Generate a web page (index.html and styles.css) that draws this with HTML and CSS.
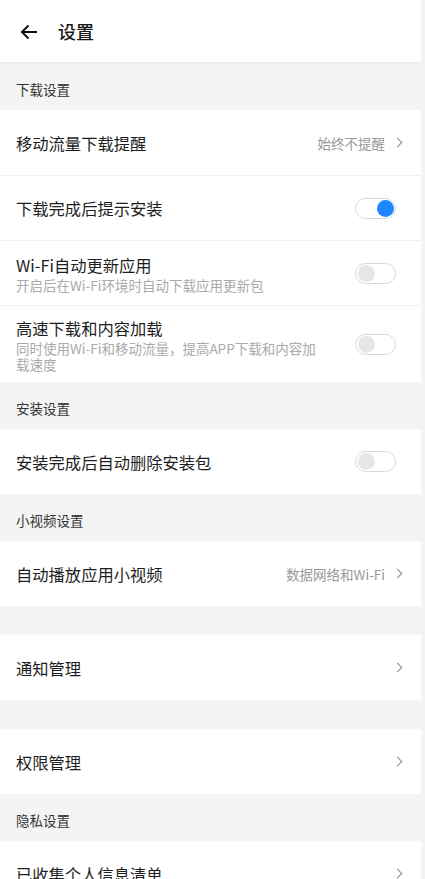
FILE: index.html
```html
<!DOCTYPE html>
<html lang="zh-CN">
<head>
    <meta charset="UTF-8">
    <meta name="viewport" content="width=device-width, initial-scale=1.0">
    <title>设置</title>
    <link rel="stylesheet" href="styles.css">
</head>
<body>
<div id="page">
    <header class="topbar">
        <a class="back">
            <svg width="18" height="16" viewBox="0 0 18 16"><path d="M17 8H2M8.5 1.5 2 8l6.5 6.5" fill="none" stroke="#111" stroke-width="2"/></svg>
        </a>
        <h1 class="title">设置</h1>
    </header>

    <div class="group-title">下载设置</div>
    <ul class="group">
        <li class="row">
            <span class="label">移动流量下载提醒</span>
            <span class="value">始终不提醒</span>
            <i class="arrow"></i>
        </li>
        <li class="row">
            <span class="label">下载完成后提示安装</span>
            <span class="switch on"></span>
        </li>
        <li class="row">
            <div class="text">
                <span class="label">Wi-Fi自动更新应用</span>
                <p class="desc">开启后在Wi-Fi环境时自动下载应用更新包</p>
            </div>
            <span class="switch"></span>
        </li>
        <li class="row row-tall">
            <div class="text">
                <span class="label">高速下载和内容加载</span>
                <p class="desc desc-wrap">同时使用Wi-Fi和移动流量，提高APP下载和内容加载速度</p>
            </div>
            <span class="switch"></span>
        </li>
    </ul>

    <div class="group-title">安装设置</div>
    <ul class="group">
        <li class="row">
            <span class="label">安装完成后自动删除安装包</span>
            <span class="switch"></span>
        </li>
    </ul>

    <div class="group-title">小视频设置</div>
    <ul class="group">
        <li class="row">
            <span class="label">自动播放应用小视频</span>
            <span class="value">数据网络和Wi-Fi</span>
            <i class="arrow"></i>
        </li>
    </ul>

    <div class="gap"></div>
    <ul class="group">
        <li class="row">
            <span class="label">通知管理</span>
            <i class="arrow"></i>
        </li>
    </ul>

    <div class="gap"></div>
    <ul class="group">
        <li class="row">
            <span class="label">权限管理</span>
            <i class="arrow"></i>
        </li>
    </ul>

    <div class="group-title">隐私设置</div>
    <ul class="group">
        <li class="row">
            <span class="label">已收集个人信息清单</span>
            <i class="arrow"></i>
        </li>
    </ul>
</div>
</body>
</html>
```

FILE: styles.css
```css
html, body {
    margin: 0;
    background: #f4f4f4;
}

body {
    font-family: "Noto Sans CJK SC", "Noto Sans", sans-serif;
    color: #222;
}

ul {
    margin: 0;
    padding: 0;
    list-style: none;
}

#page {
    width: 421px;
    overflow: hidden;
}

.topbar {
    display: flex;
    align-items: center;
    height: 62px;
    background: #fff;
    border-bottom: 1px solid #ebebeb;
    box-shadow: 0 1px 2px rgba(0, 0, 0, .03);
    padding: 0 0 0 20px;
}

.back {
    display: flex;
    width: 18px;
    height: 16px;
    margin-top: 2px;
}

.title {
    margin: 0 0 0 20px;
    font-size: 18px;
    font-weight: 500;
    line-height: 1;
    color: #1a1a1a;
}

.group-title {
    height: 47px;
    box-sizing: border-box;
    padding: 16px 16px 0;
    font-size: 13.5px;
    line-height: 20px;
    color: #333;
}

.gap {
    height: 29px;
}

.group {
    background: #fff;
}

.row {
    display: flex;
    align-items: center;
    min-height: 65px;
    box-sizing: border-box;
    padding: 0 19px 0 16px;
}

.row + .row {
    border-top: 1px solid #efefef;
}

.row-tall {
    min-height: 77px;
    padding-top: 9px;
    padding-bottom: 9px;
}

.label {
    flex: 1;
    font-size: 16.3px;
    line-height: 22px;
    color: #1e1e1e;
}

.text {
    flex: 1;
    display: flex;
    flex-direction: column;
}

.desc {
    margin: 1px 0 0;
    font-size: 13.5px;
    line-height: 16px;
    color: #aaa;
}

.desc-wrap {
    max-width: 312px;
}

.value {
    font-size: 13.5px;
    color: #999;
}

.arrow {
    display: block;
    width: 6px;
    height: 6px;
    margin: 0 1px 0 9px;
    border-top: 1.5px solid #888;
    border-right: 1.5px solid #888;
    transform: rotate(45deg);
}

.switch {
    position: relative;
    flex: none;
    width: 39px;
    height: 19px;
    margin-right: 6px;
    border: 1.5px solid #d9d9d9;
    border-radius: 12px;
    background: #fff;
}

.switch::after {
    content: "";
    position: absolute;
    left: 2px;
    top: 1px;
    width: 17px;
    height: 17px;
    border-radius: 50%;
    background: #e6e6e6;
}

.switch.on::after {
    left: auto;
    right: 1px;
    background: #1e86ff;
}
```
